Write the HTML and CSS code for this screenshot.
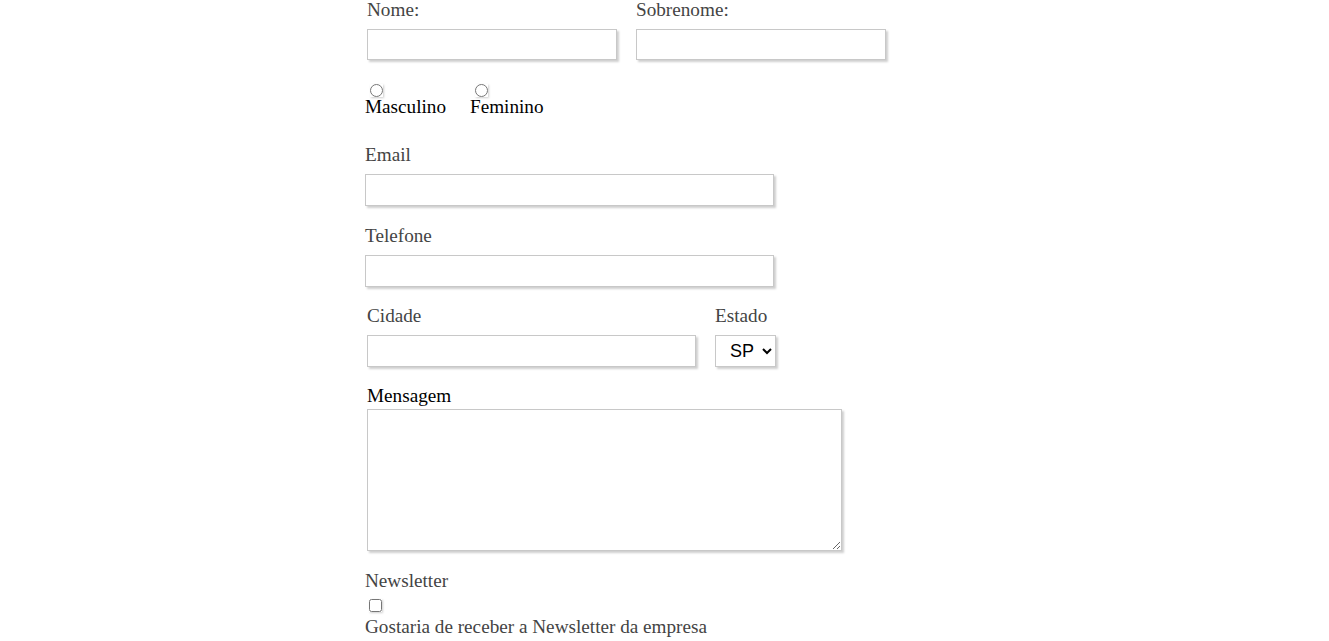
FILE: index.html
```html
<!DOCTYPE html>
<html lang="pt-BR">
<head>
<meta charset="utf-8">
<title>Formulário</title>
<link rel="stylesheet" href="styles.css">
</head>
<body>
<form class="form">
  <div class="row">
    <div class="field">
      <label class="lbl" for="nome">Nome:</label>
      <input class="inp w250 h31" type="text" id="nome">
    </div>
    <div class="field">
      <label class="lbl" for="sobrenome">Sobrenome:</label>
      <input class="inp w250 h31" type="text" id="sobrenome">
    </div>
  </div>

  <div class="radios">
    <div class="opt opt-first">
      <input class="radio" type="radio" name="sexo" id="masc">
      <label class="opt-lbl" for="masc">Masculino</label>
    </div>
    <div class="opt">
      <input class="radio" type="radio" name="sexo" id="fem">
      <label class="opt-lbl" for="fem">Feminino</label>
    </div>
  </div>

  <div class="block block-email">
    <label class="lbl" for="email">Email</label>
    <input class="inp w409" type="email" id="email">
  </div>

  <div class="block block-gap">
    <label class="lbl" for="tel">Telefone</label>
    <input class="inp w409" type="tel" id="tel">
  </div>

  <div class="row row-city">
    <div class="field">
      <label class="lbl" for="cidade">Cidade</label>
      <input class="inp w329" type="text" id="cidade">
    </div>
    <div class="field">
      <label class="lbl" for="estado">Estado</label>
      <select class="sel" id="estado">
        <option>SP</option>
        <option>RJ</option>
        <option>MG</option>
      </select>
    </div>
  </div>

  <div class="block block-msg">
    <label class="lbl-dark" for="msg">Mensagem</label>
    <textarea class="txt" id="msg"></textarea>
  </div>

  <div class="block block-news">
    <span class="lbl">Newsletter</span>
    <input class="check" type="checkbox" id="news">
    <label class="lbl" for="news">Gostaria de receber a Newsletter da empresa</label>
  </div>
</form>
</body>
</html>
```

FILE: styles.css
```css
html, body {
  margin: 0;
  padding: 0;
  background: #fff;
}

body {
  font-family: "Liberation Serif", "Times New Roman", serif;
  font-size: 19.2px;
  line-height: 20px;
}

.form {
  width: 599px;
  margin: 0 auto;
}

.lbl {
  display: block;
  color: #444;
  line-height: 20px;
}

.lbl-dark {
  display: block;
  color: #000;
  line-height: 20px;
  padding-left: 2px;
}

.row {
  display: flex;
  gap: 19px;
  padding-left: 2px;
}

.field {
  display: flex;
  flex-direction: column;
  align-items: flex-start;
}

.inp {
  display: block;
  box-sizing: border-box;
  height: 32px;
  margin: 9px 0 0 0;
  padding: 2px 6px;
  border: 1px solid #c8c8c8;
  background: #fff;
  box-shadow: 2px 2px 2px #cfcfcf;
  font: 16px "Liberation Serif", serif;
  outline: none;
}

.h31 { height: 31px; }
.w250 { width: 250px; }
.w409 { width: 409px; }
.w329 { width: 329px; }

.radios {
  display: flex;
  margin-top: 24px;
}

.opt {
  display: flex;
  flex-direction: column;
  align-items: flex-start;
}

.opt-first {
  width: 105px;
}

.radio {
  display: block;
  width: 13px;
  height: 13px;
  margin: 0 0 0 5px;
  box-shadow: 1px 1px 2px #cfcfcf;
  border-radius: 50%;
}

.opt-lbl {
  display: block;
  color: #000;
  margin-top: 0;
}

.block {
  display: flex;
  flex-direction: column;
  align-items: flex-start;
}

.block-email {
  margin-top: 28px;
}

.block-gap {
  margin-top: 20px;
}

.row-city {
  margin-top: 19px;
}

.sel {
  box-sizing: border-box;
  width: 61px;
  height: 32px;
  margin-top: 9px;
  padding: 0 0 0 10px;
  border: 1px solid #c8c8c8;
  border-radius: 0;
  background: #fff;
  box-shadow: 2px 2px 2px #cfcfcf;
  font: 18px "Liberation Sans", Arial, sans-serif;
  color: #000;
  outline: none;
}

.block-msg {
  margin-top: 19px;
}

.txt {
  box-sizing: border-box;
  width: 475px;
  height: 142px;
  margin: 3px 0 0 2px;
  border: 1px solid #c8c8c8;
  box-shadow: 2px 2px 2px #cfcfcf;
  font: 16px "Liberation Serif", serif;
  outline: none;
}

.block-news {
  margin-top: 20px;
}

.check {
  display: block;
  width: 13px;
  height: 13px;
  margin: 8px 0 5px 4px;
  box-shadow: 1px 1px 2px #cfcfcf;
  border-radius: 2px;
}
```
